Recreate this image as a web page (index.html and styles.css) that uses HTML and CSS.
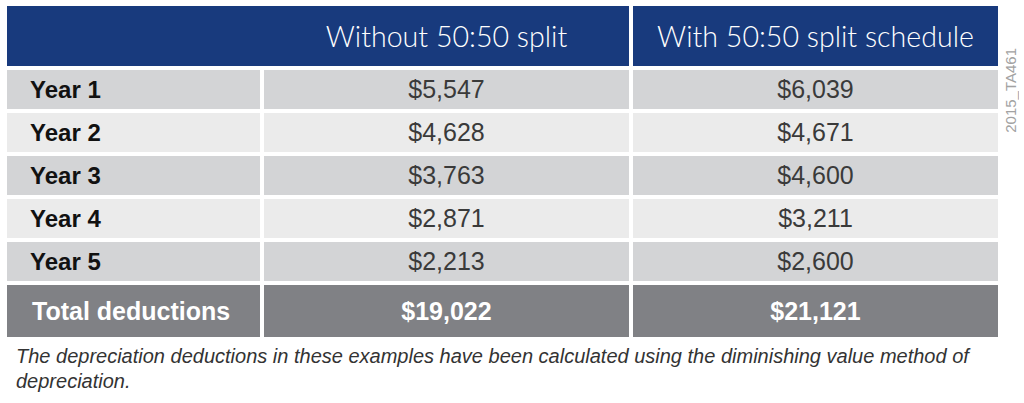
FILE: index.html
```html
<!DOCTYPE html>
<html lang="en">
<head>
<meta charset="utf-8">
<title>Depreciation deductions</title>
<link rel="stylesheet" href="styles.css">
</head>
<body>
<div class="wrap">
  <div class="table">
    <div class="head head-wide"><span class="head-text">Without 50:50 split</span></div>
    <div class="head">With 50:50 split schedule</div>

    <div class="label dark">Year 1</div>
    <div class="val dark">$5,547</div>
    <div class="val dark">$6,039</div>

    <div class="label light">Year 2</div>
    <div class="val light">$4,628</div>
    <div class="val light">$4,671</div>

    <div class="label dark">Year 3</div>
    <div class="val dark">$3,763</div>
    <div class="val dark">$4,600</div>

    <div class="label light">Year 4</div>
    <div class="val light">$2,871</div>
    <div class="val light">$3,211</div>

    <div class="label dark">Year 5</div>
    <div class="val dark">$2,213</div>
    <div class="val dark">$2,600</div>

    <div class="label total">Total deductions</div>
    <div class="val total">$19,022</div>
    <div class="val total">$21,121</div>
  </div>
  <div class="side">2015_TA461</div>
</div>
<p class="caption">The depreciation deductions in these examples have been calculated using the diminishing value method of depreciation.</p>
</body>
</html>
```

FILE: styles.css
```css
html, body {
  margin: 0;
  padding: 0;
  background: #ffffff;
}

body {
  font-family: "Liberation Sans", Arial, sans-serif;
}

.wrap {
  display: flex;
  align-items: flex-start;
  padding: 6px 0 0 7px;
  gap: 5px;
}

.table {
  display: grid;
  grid-template-columns: 253px 365px 365px;
  grid-template-rows: 60px repeat(5, 39px) 52px;
  gap: 4px;
}

.head {
  background: #183a7d;
  color: #ffffff;
  font-family: Lato, "Liberation Sans", sans-serif;
  font-weight: 300;
  font-size: 28.6px;
  display: flex;
  align-items: center;
  justify-content: center;
}

.head-wide {
  grid-column: span 2;
  padding-left: 257px;
}

.head-text {
  flex: 1;
  text-align: center;
}

.label, .val {
  display: flex;
  align-items: center;
}

.label {
  padding-left: 23px;
  font-weight: bold;
  font-size: 24px;
  color: #111111;
}

.val {
  justify-content: center;
  font-size: 25px;
  color: #3a3a3a;
}

.dark {
  background: #d3d4d6;
}

.light {
  background: #ebebeb;
}

.total {
  background: #808185;
  color: #ffffff;
  font-weight: bold;
  font-size: 25px;
}

.label.total {
  padding-left: 25px;
}

.side {
  margin-top: 42px;
  writing-mode: vertical-rl;
  transform: rotate(180deg);
  font-size: 15px;
  color: #a2a2a2;
  line-height: 15px;
}

.caption {
  margin: 7px 0 0 16px;
  width: 1000px;
  font-style: italic;
  font-size: 20px;
  line-height: 25px;
  color: #333333;
}
```
